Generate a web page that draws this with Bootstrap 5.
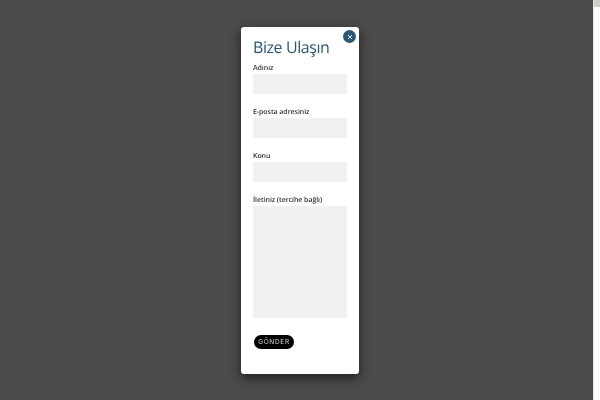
<!DOCTYPE html>
<html lang="tr">
<head>
<meta charset="utf-8">
<title>Bize Ulaşın</title>
<link href="https://cdn.jsdelivr.net/npm/bootstrap@5.3.0/dist/css/bootstrap.min.css" rel="stylesheet">
<style>
html,body{height:100%;overflow:hidden}
body{background:#fff;font-family:"Open Sans","Liberation Sans",sans-serif;text-rendering:geometricPrecision}
.stage{height:400px;padding:27px 0 0 7px;background:#4b4b4b}
.track{width:7px;height:400px;background:#fff;border-left:1px solid #e4e4e4}
.track-cap{height:7px;background:#cfcfca}
.sheet{width:118px;height:347px;border-radius:3px;box-shadow:0 4px 12px rgba(0,0,0,.6);padding:8px 12px 0 12px;position:relative}
.sheet h1{font-size:16px;font-weight:500;letter-spacing:-.42px;color:#2b5878;line-height:24px;margin:0 0 3px;will-change:opacity}
.fld-label{display:block;font-size:7px;font-weight:600;letter-spacing:-.06px;color:#333;line-height:10px;margin:0;padding-top:2px;will-change:opacity}
.fld{display:block;width:94px;height:20px;background:#f1f1f1;border:0;border-radius:0;padding:0;margin-bottom:12px}
.fld-area{height:112px;margin-bottom:17px;resize:none}
.send{font-family:"Inter","Liberation Sans",sans-serif;background:#000;color:#ddd;font-size:6.5px;font-weight:400;letter-spacing:.7px;width:40px;height:14px;padding:0;border:0;border-radius:7px;line-height:14px;margin-left:1px;will-change:opacity}
.shut{position:absolute;top:3px;right:3px;width:13px;height:13px;padding:0;border:0;border-radius:50%;background:#2b5878;color:#fff;display:flex;align-items:center;justify-content:center}
</style>
</head>
<body class="d-flex">
<div class="stage flex-grow-1 d-flex justify-content-center">
  <form class="sheet bg-white">
    <button type="button" class="shut" aria-label="Kapat"><svg width="6" height="6" viewBox="0 0 6 6"><path d="M1 1l4 4M5 1L1 5" stroke="#dfe8ef" stroke-width="1"/></svg></button>
    <h1>Bize Ulaşın</h1>
    <label class="fld-label">Adınız</label>
    <input class="fld" type="text">
    <label class="fld-label">E-posta adresiniz</label>
    <input class="fld" type="text">
    <label class="fld-label">Konu</label>
    <input class="fld" type="text">
    <label class="fld-label">İletiniz (tercihe bağlı)</label>
    <textarea class="fld fld-area"></textarea>
    <button type="button" class="send d-block">GÖNDER</button>
  </form>
</div>
<div class="track flex-shrink-0"><div class="track-cap"></div></div>
</body>
</html>
